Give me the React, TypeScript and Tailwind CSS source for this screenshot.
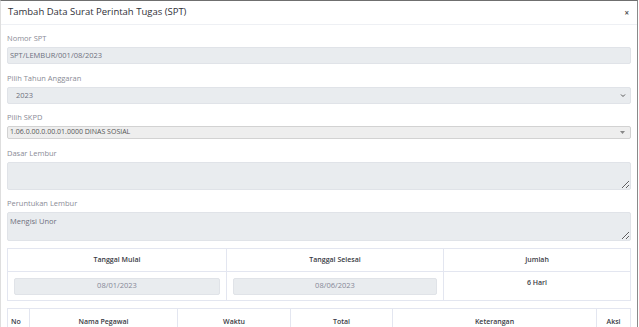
import React from 'react';

const font = { fontFamily: '"Open Sans", "Noto Sans", sans-serif' };

function Label({ children }: { children: React.ReactNode }) {
  return <div className="h-[10px] leading-[10px] text-[7.5px] text-[#8a8b96] mb-[4px]">{children}</div>;
}

export default function App() {
  return (
    <div className="w-[639px] h-[327px] overflow-hidden bg-white pr-px" style={font}>
      <div className="h-full border-t border-[#6f6f6f] border-l border-l-[#dedede] border-r border-r-[#8a8a8a] flex flex-col">
        {/* Header */}
        <div className="h-[24px] shrink-0 flex items-center justify-between pl-[7px] pr-[8px] border-b border-[#eef0f4]">
          <h1 className="text-[9.5px] text-[#2f3038]">Tambah Data Surat Perintah Tugas (SPT)</h1>
          <span className="text-[8px] leading-none text-[#555] font-bold">×</span>
        </div>

        {/* Body */}
        <div className="px-[6px] pt-[8px]">
          <div className="mb-[9px]">
            <Label>Nomor SPT</Label>
            <div className="h-[17px] bg-[#e9ecef] border border-[#e0e3e8] rounded-[2px] flex items-center px-[2px] text-[7.5px] text-[#6e707e]">
              SPT/LEMBUR/001/08/2023
            </div>
          </div>

          <div className="mb-[8px]">
            <Label>Pilih Tahun Anggaran</Label>
            <div className="h-[17px] bg-[#e9ecef] border border-[#e0e3e8] rounded-[2px] flex items-center justify-between pl-[8px] pr-[4px] text-[7.5px] text-[#6e707e]">
              <span>2023</span>
              <svg width="6" height="5" viewBox="0 0 6 5">
                <path d="M1 1.5 L3 3.5 L5 1.5" fill="none" stroke="#555" strokeWidth="1" />
              </svg>
            </div>
          </div>

          <div className="mb-[9px]">
            <Label>Pilih SKPD</Label>
            <div className="h-[13px] bg-[#eeeeee] border border-[#d2d2d2] rounded-[2px] flex items-center justify-between pl-[2px] pr-[5px] text-[7px] text-[#555]">
              <span>1.06.0.00.0.00.01.0000 DINAS SOSIAL</span>
              <svg width="5" height="3" viewBox="0 0 5 3">
                <path d="M0 0 L5 0 L2.5 3 Z" fill="#888" />
              </svg>
            </div>
          </div>

          <div className="mb-[8px]">
            <Label>Dasar Lembur</Label>
            <textarea
              readOnly
              className="block w-full h-[28px] bg-[#e9ecef] border border-[#e0e3e8] rounded-[2px] px-[2px] text-[7.5px] text-[#6e707e] outline-none"
              defaultValue=""
            />
          </div>

          <div className="mb-[7px]">
            <Label>Peruntukan Lembur</Label>
            <textarea
              readOnly
              className="block w-full h-[29px] bg-[#e9ecef] border border-[#e0e3e8] rounded-[2px] px-[2px] pt-[3px] leading-[10px] text-[7.5px] text-[#6e707e] outline-none"
              defaultValue="Mengisi Unor"
            />
          </div>

          {/* Tanggal table */}
          <table className="w-full border-collapse text-[7px] mb-[7px]">
            <thead>
              <tr className="h-[23px]">
                <th className="w-[219px] border border-[#e3e6f0] font-semibold text-[#3a3b45]">Tanggal Mulai</th>
                <th className="w-[217px] border border-[#e3e6f0] font-semibold text-[#3a3b45]">Tanggal Selesai</th>
                <th className="border border-[#e3e6f0] font-semibold text-[#3a3b45]">Jumlah</th>
              </tr>
            </thead>
            <tbody>
              <tr className="h-[29px]">
                <td className="border border-[#e3e6f0] px-[6px]">
                  <div className="h-[17px] bg-[#e9ecef] border border-[#e0e3e8] rounded-[2px] flex items-center justify-center text-[7.5px] text-[#858796]">08/01/2023</div>
                </td>
                <td className="border border-[#e3e6f0] px-[6px]">
                  <div className="h-[17px] bg-[#e9ecef] border border-[#e0e3e8] rounded-[2px] flex items-center justify-center text-[7.5px] text-[#858796]">08/06/2023</div>
                </td>
                <td className="border border-[#e3e6f0] align-top pt-[6px] text-center font-semibold text-[#3a3b45]">6 Hari</td>
              </tr>
            </tbody>
          </table>

          {/* Pegawai table */}
          <table className="w-full border-collapse text-[7px]">
            <thead>
              <tr className="h-[28px]">
                <th className="w-[22px] border border-[#e3e6f0] font-semibold text-[#3a3b45] text-left pl-[3px]">No</th>
                <th className="w-[148px] border border-[#e3e6f0] font-semibold text-[#3a3b45]">Nama Pegawai</th>
                <th className="w-[113px] border border-[#e3e6f0] font-semibold text-[#3a3b45]">Waktu</th>
                <th className="w-[102px] border border-[#e3e6f0] font-semibold text-[#3a3b45]">Total</th>
                <th className="w-[204px] border border-[#e3e6f0] font-semibold text-[#3a3b45]">Keterangan</th>
                <th className="border border-[#e3e6f0] font-semibold text-[#3a3b45]">Aksi</th>
              </tr>
            </thead>
          </table>
        </div>
      </div>
    </div>
  );
}
